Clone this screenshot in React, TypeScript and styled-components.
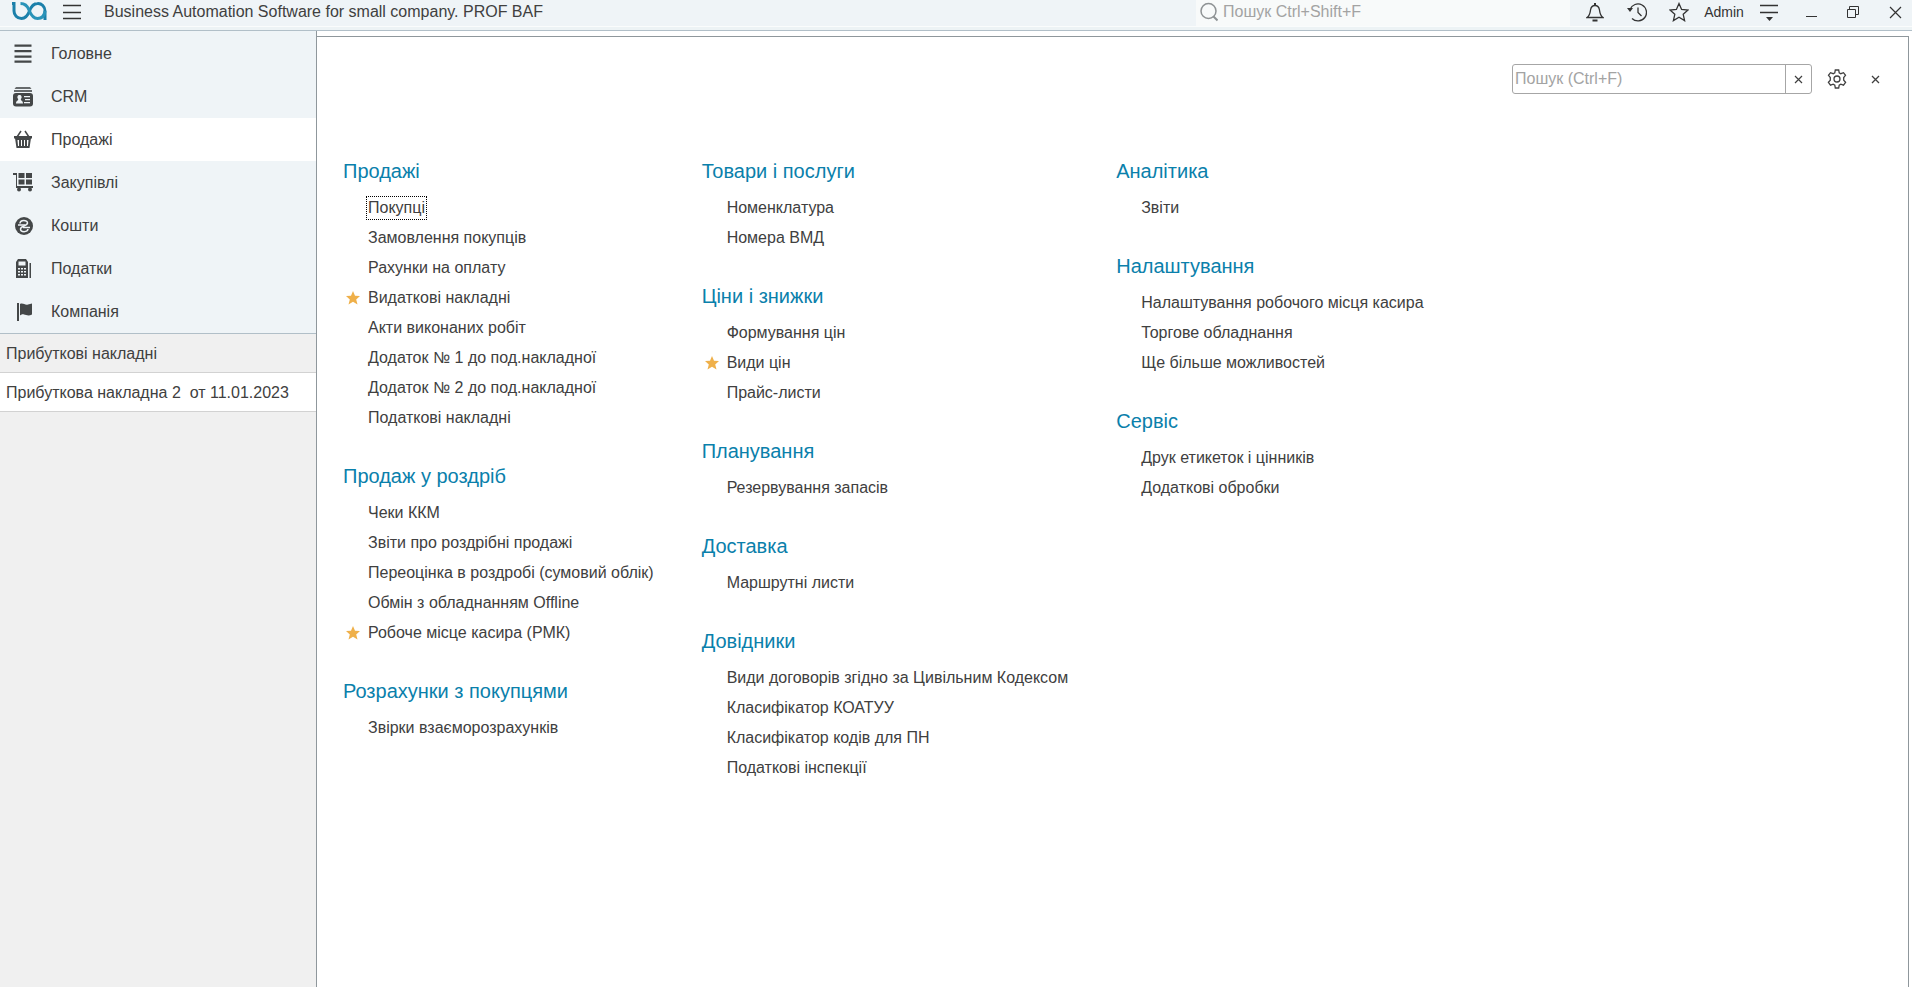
import React from 'react';
import styled, { createGlobalStyle, css } from 'styled-components';

const colors = {
  chrome: '#eff4f7',
  grey: '#f0f0f0',
  line: '#b1bfc8',
  panelLine: '#8f979c',
  softLine: '#d2d2d2',
  text: '#404040',
  accent: '#0a80ab',
  hint: '#a3a3a3',
  icon: '#444748',
};

const GlobalStyle = createGlobalStyle`
  *, *::before, *::after { box-sizing: border-box; }
  html, body, #root { height: 100%; }
  body {
    margin: 0;
    background: #fff;
    color: ${colors.text};
    font: 16px/20px "Liberation Sans", Arial, sans-serif;
  }
  button, input { font: inherit; color: inherit; }
  svg { display: block; flex: none; }
`;

const Shell = styled.div`
  display: flex;
  flex-direction: column;
  min-height: 100%;
`;

const TitleBar = styled.header`
  display: flex;
  align-items: flex-start;
  height: 31px;
  overflow: hidden;
  border-bottom: 1px solid ${colors.line};
  background: ${colors.chrome};
  box-shadow: inset 0 -3px #edf3f5, inset 0 -4px #fafcfc;
`;

const plainButton = css`
  display: flex;
  align-items: center;
  justify-content: center;
  padding: 0;
  border: 0;
  background: none;
`;

const BarButton = styled.button<{ $width?: number }>`
  ${plainButton}
  width: ${(p) => p.$width ?? 42}px;
  height: 24px;
  font-size: 14px;
  color: #333;
`;

const Logo = styled.a`
  display: flex;
  width: 57px;
  height: 24px;
  padding-left: 12px;
`;

const AppTitle = styled.h1`
  flex: 1;
  margin: 0 0 0 18px;
  font-size: 16px;
  line-height: 24px;
  font-weight: 400;
  white-space: nowrap;
`;

const GlobalSearch = styled.label`
  display: flex;
  align-items: center;
  width: 374px;
  height: 26px;
  padding: 0 4px 2px;
  gap: 5px;
  background: #f8fafa;
  color: #8e9294;
`;

const BareInput = styled.input`
  flex: 1;
  min-width: 0;
  padding: 0;
  border: 0;
  outline: 0;
  background: none;
  &::placeholder { color: ${colors.hint}; opacity: 1; }
`;

const BarActions = styled.div`
  display: flex;
  margin-right: -4px;
  padding-left: 4px;
`;

const Body = styled.div`
  display: flex;
  flex: 1;
`;

const Sidebar = styled.aside`
  flex: none;
  width: 316px;
  background: ${colors.grey};
`;

const Sections = styled.nav`
  padding-top: 1px;
  border-bottom: 1px solid ${colors.line};
  background: ${colors.chrome};
`;

const SectionLink = styled.a<{ $active?: boolean }>`
  display: flex;
  align-items: center;
  height: 43px;
  padding-left: 13px;
  gap: 16px;
  background: ${(p) => (p.$active ? '#fff' : 'none')};
  color: ${colors.text};
  text-decoration: none;
  svg { color: ${colors.icon}; }
`;

const OpenWindow = styled.a<{ $active?: boolean }>`
  display: block;
  height: 39px;
  padding-left: 6px;
  border-bottom: 1px solid ${colors.softLine};
  background: ${(p) => (p.$active ? '#fff' : 'none')};
  color: ${colors.text};
  line-height: 39px;
  text-decoration: none;
  white-space: pre;
`;

const Content = styled.main`
  display: flex;
  flex: 1;
  padding: 5px 3px 0 0;
  border-left: 1px solid ${colors.panelLine};
`;

const Panel = styled.div`
  flex: 1;
  padding: 27px 28px 40px 26px;
  border-top: 1px solid ${colors.panelLine};
  border-right: 1px solid ${colors.panelLine};
`;

const PanelTools = styled.div`
  display: flex;
  justify-content: flex-end;
  align-items: center;
`;

const SearchBox = styled.div`
  display: flex;
  width: 300px;
  height: 30px;
  border: 1px solid #a6a6a6;
  border-radius: 3px;
  padding-left: 2px;
`;

const ClearButton = styled.button`
  ${plainButton}
  width: 26px;
  border-left: 1px solid #a6a6a6;
`;

const ToolButton = styled.button<{ $gap: number }>`
  ${plainButton}
  margin-left: ${(p) => p.$gap}px;
`;

const Columns = styled.div`
  display: flex;
  gap: 48px;
  padding-top: 55px;
`;

const Column = styled.div`
  display: flex;
  flex-direction: column;
  gap: 21px;
`;

const GroupTitle = styled.h2`
  margin: 0;
  font-size: 20px;
  line-height: 44px;
  font-weight: 400;
  color: ${colors.accent};
`;

const Commands = styled.ul`
  margin: 0;
  padding: 0;
  list-style: none;
`;

const Command = styled.li`
  display: flex;
  align-items: center;
  height: 30px;
`;

const StarSlot = styled.span`
  display: flex;
  width: 25px;
  padding-left: 3px;
`;

const CommandLink = styled.a<{ $focused?: boolean }>`
  color: ${colors.text};
  text-decoration: none;
  white-space: nowrap;
  outline: ${(p) => (p.$focused ? '1px dotted #000' : 'none')};
  outline-offset: 1px;
`;

type Item = { name: string; starred?: boolean; focused?: boolean };
type Group = { title: string; items: Item[] };

const list = (...names: string[]): Item[] =>
  names.map((n) => (n.startsWith('*') ? { name: n.slice(1), starred: true } : { name: n }));

const columns: Group[][] = [
  [
    {
      title: 'Продажі',
      items: [
        { name: 'Покупці', focused: true },
        ...list(
          'Замовлення покупців',
          'Рахунки на оплату',
          '*Видаткові накладні',
          'Акти виконаних робіт',
          'Додаток № 1 до под.накладної',
          'Додаток № 2 до под.накладної',
          'Податкові накладні',
        ),
      ],
    },
    {
      title: 'Продаж у роздріб',
      items: list(
        'Чеки ККМ',
        'Звіти про роздрібні продажі',
        'Переоцінка в роздробі (сумовий облік)',
        'Обмін з обладнанням Offline',
        '*Робоче місце касира (РМК)',
      ),
    },
    { title: 'Розрахунки з покупцями', items: list('Звірки взаєморозрахунків') },
  ],
  [
    { title: 'Товари і послуги', items: list('Номенклатура', 'Номера ВМД') },
    { title: 'Ціни і знижки', items: list('Формування цін', '*Види цін', 'Прайс-листи') },
    { title: 'Планування', items: list('Резервування запасів') },
    { title: 'Доставка', items: list('Маршрутні листи') },
    {
      title: 'Довідники',
      items: list(
        'Види договорів згідно за Цивільним Кодексом',
        'Класифікатор КОАТУУ',
        'Класифікатор кодів для ПН',
        'Податкові інспекції',
      ),
    },
  ],
  [
    { title: 'Аналітика', items: list('Звіти') },
    {
      title: 'Налаштування',
      items: list('Налаштування робочого місця касира', 'Торгове обладнання', 'Ще більше можливостей'),
    },
    { title: 'Сервіс', items: list('Друк етикеток і цінників', 'Додаткові обробки') },
  ],
];

const Stroke = ({ w, h, sw = 1, children }: { w: number; h: number; sw?: number; children: React.ReactNode }) => (
  <svg width={w} height={h} viewBox={`0 0 ${w} ${h}`} fill="none" stroke="currentColor" strokeWidth={sw} aria-hidden="true">
    {children}
  </svg>
);

const Solid = ({ children }: { children: React.ReactNode }) => (
  <svg width="22" height="22" viewBox="0 0 22 22" fill="currentColor" aria-hidden="true">
    {children}
  </svg>
);

const Cross = ({ size, sw = 1 }: { size: number; sw?: number }) => (
  <Stroke w={size} h={size} sw={sw}>
    <path d={`M1 1 L${size - 1} ${size - 1} M${size - 1} 1 L1 ${size - 1}`} />
  </Stroke>
);

const Star = () => (
  <svg width="14" height="14" viewBox="0 0 14 14" fill="#efb04a" aria-hidden="true">
    <path d="M7 0 L9 4.700 L14 5 L10.200 8.400 L11.500 13.500 L7 10.800 L2.500 13.500 L3.800 8.400 L0 5 L5 4.700 Z" />
  </svg>
);

const sections = [
  {
    name: 'Головне',
    icon: <path d="M1.500 1.500h17v2.300h-17zM1.500 7h17v2.300h-17zM1.500 12.500h17v2.300h-17zM1.500 17.500h17v2.300h-17z" />,
  },
  {
    name: 'CRM',
    icon: (
      <>
        <path d="M3 1h14l1.500 2h-17zM1 4h18v2H1z" opacity="0.8" />
        <rect x="0" y="7" width="20" height="13.500" rx="3" />
        <path fill="#eff4f7" d="M6.500 9a2 2.200 0 0 1 1.300 4c0 2 2.200 1.500 2.200 4.500H3c0-3 2.200-2.500 2.200-4.500A2 2.200 0 0 1 6.500 9zM11 10h6v1.300h-6zM12 13h5v1.300h-5zM11 16h6v1.300h-6z" />
      </>
    ),
  },
  {
    name: 'Продажі',
    active: true,
    icon: (
      <>
        <path d="M1 7h18v2.500H1z" />
        <path d="M4 8L8 2M16 8L12 2" stroke="currentColor" strokeWidth="1.500" />
        <path fillRule="evenodd" d="M2 9h16l-1.500 10h-13zM4.500 11l.5 6h1v-6zM8 11v6h1v-6zM11 11v6h1v-6zM14 11v6h1l.5-6z" />
      </>
    ),
  },
  {
    name: 'Закупівлі',
    icon: (
      <>
        <path d="M0 1h4v13h16v2H3V3H0z" />
        <path d="M5.500 1h6v5h-6zM13 1h6v5h-6zM5.500 7.500h6v5h-6zM13 7.500h6v5h-6z" />
        <circle cx="6" cy="17.500" r="2" />
        <circle cx="17" cy="17.500" r="2" />
      </>
    ),
  },
  {
    name: 'Кошти',
    icon: (
      <>
        <circle cx="11" cy="11" r="9" />
        <g fill="none" stroke="#eff4f7" strokeWidth="1.500">
          <path d="M7 8.500c0-4 7.500-4 7.500-.5 0 3-7 3-7 6 0 3.500 7 3.500 7.500 0" />
          <path d="M5 10h7M10 12.500h7" />
        </g>
      </>
    ),
  },
  {
    name: 'Податки',
    icon: (
      <>
        <path fillRule="evenodd" d="M5 1h8l2 3v16H3V4zM5.500 3.500v4h7v-4zM5 10v1.500h2V10zM8 10v1.500h2V10zM11 10v1.500h2V10zM5 13v1.500h2V13zM8 13v1.500h2V13zM11 13v1.500h2V13zM5 16v1.500h2V16zM8 16v1.500h2V16zM11 16v1.500h2V16z" />
        <path d="M16.500 5h1.500v15h-1.500z" />
      </>
    ),
  },
  {
    name: 'Компанія',
    icon: <path d="M4 2h2v18H4zM7 3c3-1.500 5 1.500 8 .5l4-1v11c-4 2-6 0-8 0-2-.5-3 .5-4 1z" />,
  },
];

export default function App() {
  return (
    <Shell>
      <GlobalStyle />
      <TitleBar>
        <Logo href="#" aria-label="BAF">
          <Stroke w={35} h={22} sw={3}>
            <path stroke="#1c80aa" d="M0 3.500H2V11c0 4 3 7.500 7.500 7.500 4.500 0 6.500-3.500 8-7.500s3.500-7.500 8-7.500A7 7.500 0 0 1 33 11v9" />
            <path stroke="#2a93b8" d="M8.500 3.500c4 0 7 2.500 8.500 6.500 2 5 4 8.500 8.500 8.500 4 0 7-2 7.500-7.500" />
          </Stroke>
        </Logo>
        <BarButton $width={29} aria-label="Menu">
          <Stroke w={18} h={16}><path d="M0 1.500h18M0 8.500h18M0 14.500h18" strokeWidth="1.300" /></Stroke>
        </BarButton>
        <AppTitle>Business Automation Software for small company. PROF BAF</AppTitle>
        <GlobalSearch>
          <Stroke w={18} h={20} sw={2}>
            <circle cx="8.500" cy="9" r="7.500" strokeWidth="1.500" />
            <path d="M13.500 14.500l4 4" />
          </Stroke>
          <BareInput placeholder="Пошук Ctrl+Shift+F" aria-label="Пошук" />
        </GlobalSearch>
        <BarActions>
          <BarButton aria-label="Сповіщення">
            <Stroke w={18} h={20}>
              <path d="M1 15.500c3-2 3-4 3.500-7.500.5-3 2-4.500 4.500-4.500s4 1.500 4.500 4.500c.5 3.500.5 5.500 3.500 7.500z" strokeWidth="1.300" />
              <path d="M6.500 18.500h5M9 1v2" strokeWidth="2" />
            </Stroke>
          </BarButton>
          <BarButton aria-label="Історія">
            <Stroke w={20} h={20} sw={1.3}>
              <path d="M3 7.500A8.500 8.500 0 1 1 5 16.500M11 5.500v5l3.500 3.500" />
              <path d="M0 6l6 0-3 4z" fill="currentColor" stroke="none" />
            </Stroke>
          </BarButton>
          <BarButton aria-label="Вибране">
            <Stroke w={20} h={20} sw={1.3}>
              <path d="M10 1.500l2.600 5.900 6.400.6-4.800 4.300 1.400 6.300L10 15.300l-5.600 3.300 1.400-6.300L1 8l6.400-.6z" />
            </Stroke>
          </BarButton>
          <BarButton $width={48}>Admin</BarButton>
          <BarButton aria-label="Налаштування">
            <Stroke w={18} h={18}>
              <path d="M0 2.500h18M0 9.500h18" strokeWidth="1.500" />
              <path d="M6 14h7l-3.500 4z" fill="currentColor" stroke="none" />
            </Stroke>
          </BarButton>
          <BarButton aria-label="Згорнути">
            <Stroke w={11} h={14}><path d="M0 11.500h11" /></Stroke>
          </BarButton>
          <BarButton aria-label="Відновити">
            <Stroke w={12} h={12}><path d="M.5 3.500h8v8h-8zM2.500 3.500v-3h9v8h-3" /></Stroke>
          </BarButton>
          <BarButton aria-label="Закрити">
            <Cross size={13} sw={1.2} />
          </BarButton>
        </BarActions>
      </TitleBar>
      <Body>
        <Sidebar>
          <Sections>
            {sections.map((s) => (
              <SectionLink href="#" key={s.name} $active={s.active}>
                <Solid>{s.icon}</Solid>
                {s.name}
              </SectionLink>
            ))}
          </Sections>
          <OpenWindow href="#">Прибуткові накладні</OpenWindow>
          <OpenWindow href="#" $active>{'Прибуткова накладна 2  от 11.01.2023'}</OpenWindow>
        </Sidebar>
        <Content>
          <Panel>
            <PanelTools>
              <SearchBox>
                <BareInput placeholder="Пошук (Ctrl+F)" aria-label="Пошук" />
                <ClearButton aria-label="Очистити"><Cross size={9} sw={1.2} /></ClearButton>
              </SearchBox>
              <ToolButton $gap={15} aria-label="Налаштування">
                <Stroke w={20} h={20} sw={1.3}>
                  <circle cx="10" cy="10" r="3" />
                  <path d="M8.300 1h3.400l.5 2.800 1.600.9L16.500 3.700l2 2.600-1.800 2.200v2.800l1.900 2.100-2.100 2.800-2.700-1-1.600.9-.5 2.900H8.300l-.5-2.900-1.600-.9-2.700 1-2.100-2.800 1.900-2.100V8.500L1.500 6.300l2-2.600 2.700 1 1.600-.9z" />
                </Stroke>
              </ToolButton>
              <ToolButton $gap={24} aria-label="Закрити"><Cross size={9} sw={1.3} /></ToolButton>
            </PanelTools>
            <Columns>
              {columns.map((groups, i) => (
                <Column key={i}>
                  {groups.map((g) => (
                    <section key={g.title}>
                      <GroupTitle>{g.title}</GroupTitle>
                      <Commands>
                        {g.items.map((it) => (
                          <Command key={it.name}>
                            <StarSlot>{it.starred && <Star />}</StarSlot>
                            <CommandLink href="#" $focused={it.focused}>{it.name}</CommandLink>
                          </Command>
                        ))}
                      </Commands>
                    </section>
                  ))}
                </Column>
              ))}
            </Columns>
          </Panel>
        </Content>
      </Body>
    </Shell>
  );
}
